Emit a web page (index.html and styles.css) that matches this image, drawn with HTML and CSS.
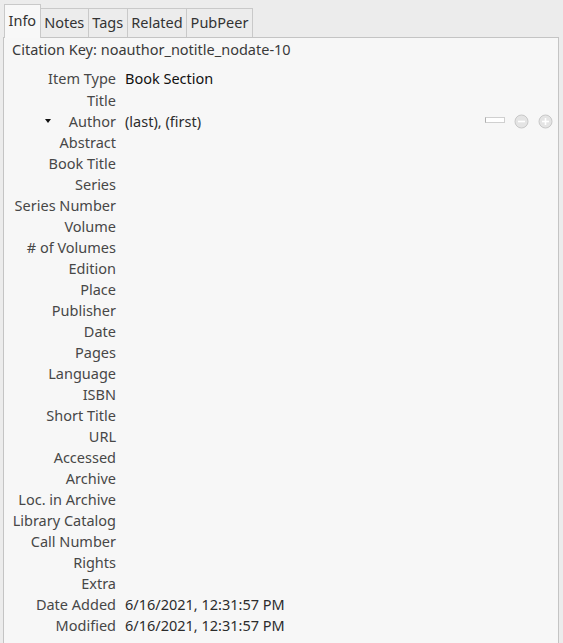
FILE: index.html
```html
<!DOCTYPE html>
<html>
<head>
<meta charset="utf-8">
<link rel="stylesheet" href="styles.css">
</head>
<body>
<div class="tabs">
  <div class="tab selected">Info</div>
  <div class="tab">Notes</div>
  <div class="tab">Tags</div>
  <div class="tab">Related</div>
  <div class="tab">PubPeer</div>
</div>
<div class="panel">
  <div class="citekey">Citation Key: noauthor_notitle_nodate-10</div>
  <div class="fields">
    <div class="row first"><div class="label">Item Type</div><div class="value strong">Book Section</div></div>
    <div class="row"><div class="label">Title</div><div class="value"></div></div>
    <div class="row author">
      <div class="label"><span class="twisty"></span><span class="ltext">Author</span></div>
      <div class="value">(last), (first)</div>
      <div class="creator-tools">
        <span class="mini-input"></span>
        <svg class="btn" width="15" height="15" viewBox="0 0 15 15"><circle cx="7.5" cy="7.5" r="6.5" fill="#e4e4e4" stroke="#c8c8c8"/><rect x="4" y="6.7" width="7" height="1.6" fill="#ffffff"/></svg>
        <svg class="btn" width="15" height="15" viewBox="0 0 15 15"><circle cx="7.5" cy="7.5" r="6.5" fill="#e4e4e4" stroke="#c8c8c8"/><rect x="4" y="6.7" width="7" height="1.6" fill="#ffffff"/><rect x="6.7" y="4" width="1.6" height="7" fill="#ffffff"/></svg>
      </div>
    </div>
    <div class="row"><div class="label">Abstract</div><div class="value"></div></div>
    <div class="row"><div class="label">Book Title</div><div class="value"></div></div>
    <div class="row"><div class="label">Series</div><div class="value"></div></div>
    <div class="row"><div class="label">Series Number</div><div class="value"></div></div>
    <div class="row"><div class="label">Volume</div><div class="value"></div></div>
    <div class="row"><div class="label"># of Volumes</div><div class="value"></div></div>
    <div class="row"><div class="label">Edition</div><div class="value"></div></div>
    <div class="row"><div class="label">Place</div><div class="value"></div></div>
    <div class="row"><div class="label">Publisher</div><div class="value"></div></div>
    <div class="row"><div class="label">Date</div><div class="value"></div></div>
    <div class="row"><div class="label">Pages</div><div class="value"></div></div>
    <div class="row"><div class="label">Language</div><div class="value"></div></div>
    <div class="row"><div class="label">ISBN</div><div class="value"></div></div>
    <div class="row"><div class="label">Short Title</div><div class="value"></div></div>
    <div class="row"><div class="label">URL</div><div class="value"></div></div>
    <div class="row"><div class="label">Accessed</div><div class="value"></div></div>
    <div class="row"><div class="label">Archive</div><div class="value"></div></div>
    <div class="row"><div class="label">Loc. in Archive</div><div class="value"></div></div>
    <div class="row"><div class="label">Library Catalog</div><div class="value"></div></div>
    <div class="row"><div class="label">Call Number</div><div class="value"></div></div>
    <div class="row"><div class="label">Rights</div><div class="value"></div></div>
    <div class="row"><div class="label">Extra</div><div class="value"></div></div>
    <div class="row"><div class="label">Date Added</div><div class="value">6/16/2021, 12:31:57 PM</div></div>
    <div class="row"><div class="label">Modified</div><div class="value">6/16/2021, 12:31:57 PM</div></div>
  </div>
</div>
</body>
</html>
```
FILE: styles.css
```css
html, body {
  margin: 0;
  padding: 0;
  background: #ececec;
  height: 100%;
  overflow: hidden;
}
body {
  font-family: "Noto Sans", sans-serif;
  font-size: 14.5px;
  color: #3c3c3c;
  padding: 4px 4px 0 3px;
  box-sizing: border-box;
}
.tabs {
  display: flex;
  align-items: flex-end;
  height: 33px;
  padding-left: 1px;
}
.tab {
  height: 29px;
  box-sizing: border-box;
  border: 1px solid #c9c9c9;
  border-bottom: none;
  border-left: none;
  padding: 0 3.5px;
  line-height: 27px;
  color: #333;
}
.tab.selected {
  height: 34px;
  border-left: 1px solid #c9c9c9;
  background: #f8f8f8;
  margin-bottom: -1px;
  position: relative;
  z-index: 1;
  line-height: 30px;
}
.panel {
  border: 1px solid #c4c4c4;
  border-bottom: none;
  background: #f7f7f7;
  height: 700px;
  box-sizing: border-box;
}
.citekey {
  padding: 2px 0 0 8px;
  line-height: 19px;
  color: #3a3a3a;
}
.fields {
  padding-top: 9px;
}
.row {
  display: flex;
  height: 21px;
  line-height: 21px;
  align-items: center;
}
.row.first {
  height: 21px;
  margin-bottom: 1px;
}
.label {
  width: 112px;
  text-align: right;
  color: #474747;
  white-space: nowrap;
  display: flex;
  justify-content: flex-end;
  align-items: center;
}
.value {
  padding-left: 9px;
  color: #2c2c2c;
  white-space: nowrap;
}
.value.strong {
  color: #111;
}
.twisty {
  width: 0;
  height: 0;
  border-left: 3.5px solid transparent;
  border-right: 3.5px solid transparent;
  border-top: 4px solid #111;
  margin-right: 18px;
  margin-bottom: 2px;
}
.author .creator-tools {
  margin-left: auto;
  display: flex;
  align-items: center;
  padding-right: 5px;
}
.mini-input {
  width: 20px;
  height: 6px;
  border: 1px solid #d0d0d0;
  background: #fff;
  margin-right: 9px;
  margin-bottom: 3px;
  box-sizing: border-box;
  border-left: 1px solid #b0b0b0;
}
.btn {
  margin-left: 9px;
}
.btn:first-of-type { margin-left: 0; }
```
